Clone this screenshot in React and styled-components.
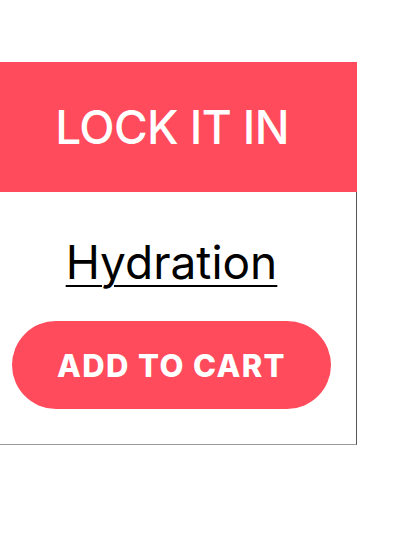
import { createGlobalStyle, styled } from 'styled-components'

const GlobalStyle = createGlobalStyle`
  html, body {
    margin: 0;
    padding: 0;
    background: #fff;
  }
  body {
    font-family: Inter, 'Noto Sans', sans-serif;
    overflow: hidden;
  }
`

const Page = styled.div`
  padding-top: 62px;
  width: 400px;
  height: 534px;
  box-sizing: border-box;
`

const Card = styled.div`
  width: 370px;
  margin-left: -13px;
`

const Header = styled.div`
  height: 130px;
  background: #ff4b5c;
  display: flex;
  align-items: center;
  justify-content: center;
`

const Title = styled.h2`
  margin: 0;
  color: #fff;
  font-weight: 500;
  font-size: 46px;
  letter-spacing: -0.6px;
  line-height: 1;
`

const Body = styled.div`
  border-right: 1px solid #555;
  border-bottom: 1px solid #999;
  padding: 43px 25px 35px;
  display: flex;
  flex-direction: column;
  align-items: center;
  gap: 31px;
`

const ProductLink = styled.a`
  color: #000;
  font-size: 46px;
  line-height: 1.2;
  text-decoration: underline;
  text-decoration-thickness: 2px;
  text-underline-offset: 6px;
  letter-spacing: 0;
`

const CartButton = styled.button`
  width: 100%;
  height: 88px;
  border: none;
  border-radius: 44px;
  background: #ff4b5c;
  color: #fff;
  font-family: inherit;
  font-weight: 800;
  font-size: 31px;
  letter-spacing: 1.4px;
  cursor: pointer;
`

const App = () => {
  return (
    <>
      <GlobalStyle />
      <Page>
        <Card>
          <Header>
            <Title>LOCK IT IN</Title>
          </Header>
          <Body>
            <ProductLink href='#'>Hydration</ProductLink>
            <CartButton>ADD TO CART</CartButton>
          </Body>
        </Card>
      </Page>
    </>
  )
}

export default App
